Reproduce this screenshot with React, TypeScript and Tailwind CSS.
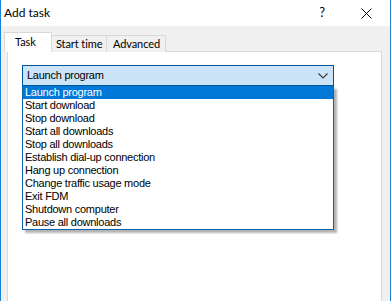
const items = [
  'Launch program',
  'Start download',
  'Stop download',
  'Start all downloads',
  'Stop all downloads',
  'Establish dial-up connection',
  'Hang up connection',
  'Change traffic usage mode',
  'Exit FDM',
  'Shutdown computer',
  'Pause all downloads',
];

export default function App() {
  return (
    <div className="w-[391px] h-[301px] overflow-hidden flex flex-col border-x border-[#1883d7] bg-[#f0f0f0] text-black">
      {/* title bar */}
      <div className="h-[26px] bg-white flex items-center shrink-0 font-['Lato',sans-serif] text-[12px]">
        <span className="pl-[3px] -mt-[1px]">Add task</span>
        <span className="ml-auto mr-[36px] text-[13px] -mt-[1px]">?</span>
        <svg width="11" height="11" viewBox="0 0 11 11" className="mr-[18px]">
          <path d="M0.5 0.5 L10.5 10.5 M10.5 0.5 L0.5 10.5" stroke="#000" strokeWidth="1" />
        </svg>
      </div>

      {/* body */}
      <div className="flex-1 flex flex-col pt-[7px] pl-[4px] pr-[8px] font-['Lato',sans-serif] text-[11px] tracking-[-0.1px] whitespace-nowrap">
        <div className="flex items-end h-[19px] relative z-10 -mb-[1px]">
          <div className="h-[20px] w-[48px] bg-white border border-b-0 border-[#d9d9d9] pl-[10px] leading-[18px] -ml-[1px]">
            Task
          </div>
          <div className="h-[17px] w-[55px] border border-b-0 border-l-0 border-[#d9d9d9] pl-[4px] leading-[16px] bg-[#f0f0f0]">
            Start time
          </div>
          <div className="h-[17px] w-[59px] border border-b-0 border-l-0 border-[#d9d9d9] pl-[6px] leading-[16px] bg-[#f0f0f0]">
            Advanced
          </div>
        </div>

        <div className="flex-1 ml-[2px] bg-white border border-[#d9d9d9] border-b-0 pt-[13px] pl-[14px] font-['Liberation_Sans',Arial,sans-serif] text-[11px] tracking-[-0.25px]">
          <div className="relative w-[312px]">
            <div className="h-[21px] border border-[#005499] bg-[#cce4f7] flex items-center pl-[4px]">
              <span>Launch program</span>
              <svg width="10" height="6" viewBox="0 0 10 6" className="ml-auto mr-[5px]">
                <path d="M0.5 0.5 L5 5 L9.5 0.5" stroke="#3c3c3c" strokeWidth="1.2" fill="none" />
              </svg>
            </div>
            <div className="absolute left-0 top-[21px] w-[312px] bg-white border border-[#0a64ad] border-t-0 shadow-[3px_3px_2px_rgba(0,0,0,0.3)]">
              {items.map((t, i) => (
                <div
                  key={t}
                  className={`h-[13px] leading-[13px] pl-[2px] ${i === 0 ? 'bg-[#0078d7] text-white' : ''}`}
                >
                  {t}
                </div>
              ))}
            </div>
          </div>
        </div>
      </div>
    </div>
  );
}
